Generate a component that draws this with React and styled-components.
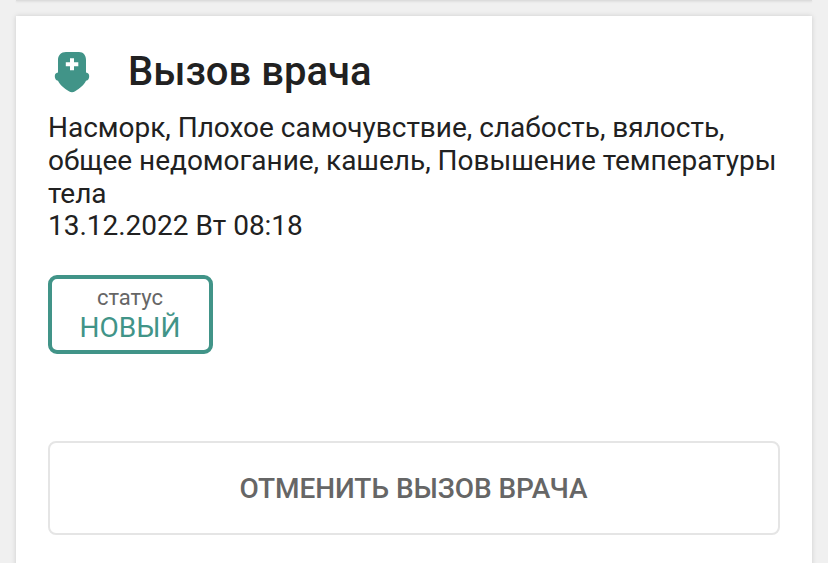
import styled, { createGlobalStyle } from 'styled-components';

const GlobalStyle = createGlobalStyle`
   * {
      box-sizing: border-box;
   }
   body {
      margin: 0;
      height: 563px;
      overflow: hidden;
      background-color: #f0f0f0;
      color: #212121;
      font-family: Roboto, sans-serif;
   }
`;

function DoctorIcon() {
   return (
      <svg width='36' height='42' viewBox='0 0 36 42'>
         <path
            fill='#419488'
            d='M12 1h13c4.500 0 7 3.500 7 8v12.600c2.300 .3 3.200 1.500 3.200 3.600 0 2.200-.9 4-3.200 4.500-1.800 4.300-6.500 7.800-10.500 10.300-2.500 1.600-4.500 1.600-7 0C10.500 37.500 5.800 34 4 29.700c-2.200-.5-3.200-2.300-3.200-4.500 0-2.100 .9-3.300 3.200-3.600V9c0-4.500 3-8 8-8z'
         />
         <path
            fill='#fff'
            d='M16 7.200h4v4h4.300v4h-4.300v4h-4v-4h-4.200v-4h4.200z'
         />
      </svg>
   );
}

function App() {
   return (
      <Page>
         <GlobalStyle />
         <PreviousCard />
         <Card>
            <Header>
               <DoctorIcon />
               <Title>Вызов врача</Title>
            </Header>
            <Description>
               Насморк, Плохое самочувствие, слабость, вялость, общее
               недомогание, кашель, Повышение температуры тела
            </Description>
            <VisitDate>13.12.2022 Вт 08:18</VisitDate>
            <Status>
               <StatusLabel>статус</StatusLabel>
               <StatusValue>НОВЫЙ</StatusValue>
            </Status>
            <CancelButton>Отменить вызов врача</CancelButton>
         </Card>
      </Page>
   );
}

export default App;

const Page = styled.main`
   display: flex;
   flex-direction: column;
   gap: 15px;
   height: 563px;
   padding: 0 16px;
   overflow: hidden;
`;
const PreviousCard = styled.div`
   flex: none;
   height: 1px;
   background-color: #dcdcdc;
   box-shadow: 0 1px 2px rgba(0, 0, 0, 0.1);
`;
const Card = styled.section`
   display: flex;
   flex: none;
   flex-direction: column;
   align-items: flex-start;
   height: 580px;
   padding: 32px;
   background-color: #fff;
   box-shadow: 0 0 5px rgba(0, 0, 0, 0.15);
`;
const Header = styled.header`
   display: flex;
   align-items: center;
   gap: 38px;
   height: 48px;
   padding-left: 6px;
`;
const Title = styled.h1`
   margin: 0;
   font-size: 40px;
   font-weight: 500;
   line-height: 48px;
`;
const Description = styled.p`
   width: 740px;
   margin: 15px 0 0;
   font-size: 28px;
   letter-spacing: -0.02px;
   line-height: 33px;
`;
const VisitDate = styled.time`
   font-size: 28px;
   letter-spacing: -0.02px;
   line-height: 32px;
`;
const Status = styled.div`
   display: flex;
   flex-direction: column;
   align-items: center;
   width: 165px;
   height: 79px;
   margin-top: 33px;
   padding: 6px 1px 0 0;
   border: 4px solid #419488;
   border-radius: 9px;
`;
const StatusLabel = styled.span`
   color: #666;
   font-size: 22px;
   line-height: 26px;
`;
const StatusValue = styled.span`
   color: #419488;
   font-size: 28px;
   line-height: 34px;
`;
const CancelButton = styled.button`
   width: 732px;
   height: 94px;
   margin-top: 87px;
   padding: 1px 1px 0 0;
   border: 2px solid #e5e5e5;
   border-radius: 8px;
   background-color: #fff;
   color: #666;
   font-family: inherit;
   font-size: 28px;
   font-weight: 500;
   letter-spacing: -0.06px;
   text-transform: uppercase;
   cursor: pointer;
`;
